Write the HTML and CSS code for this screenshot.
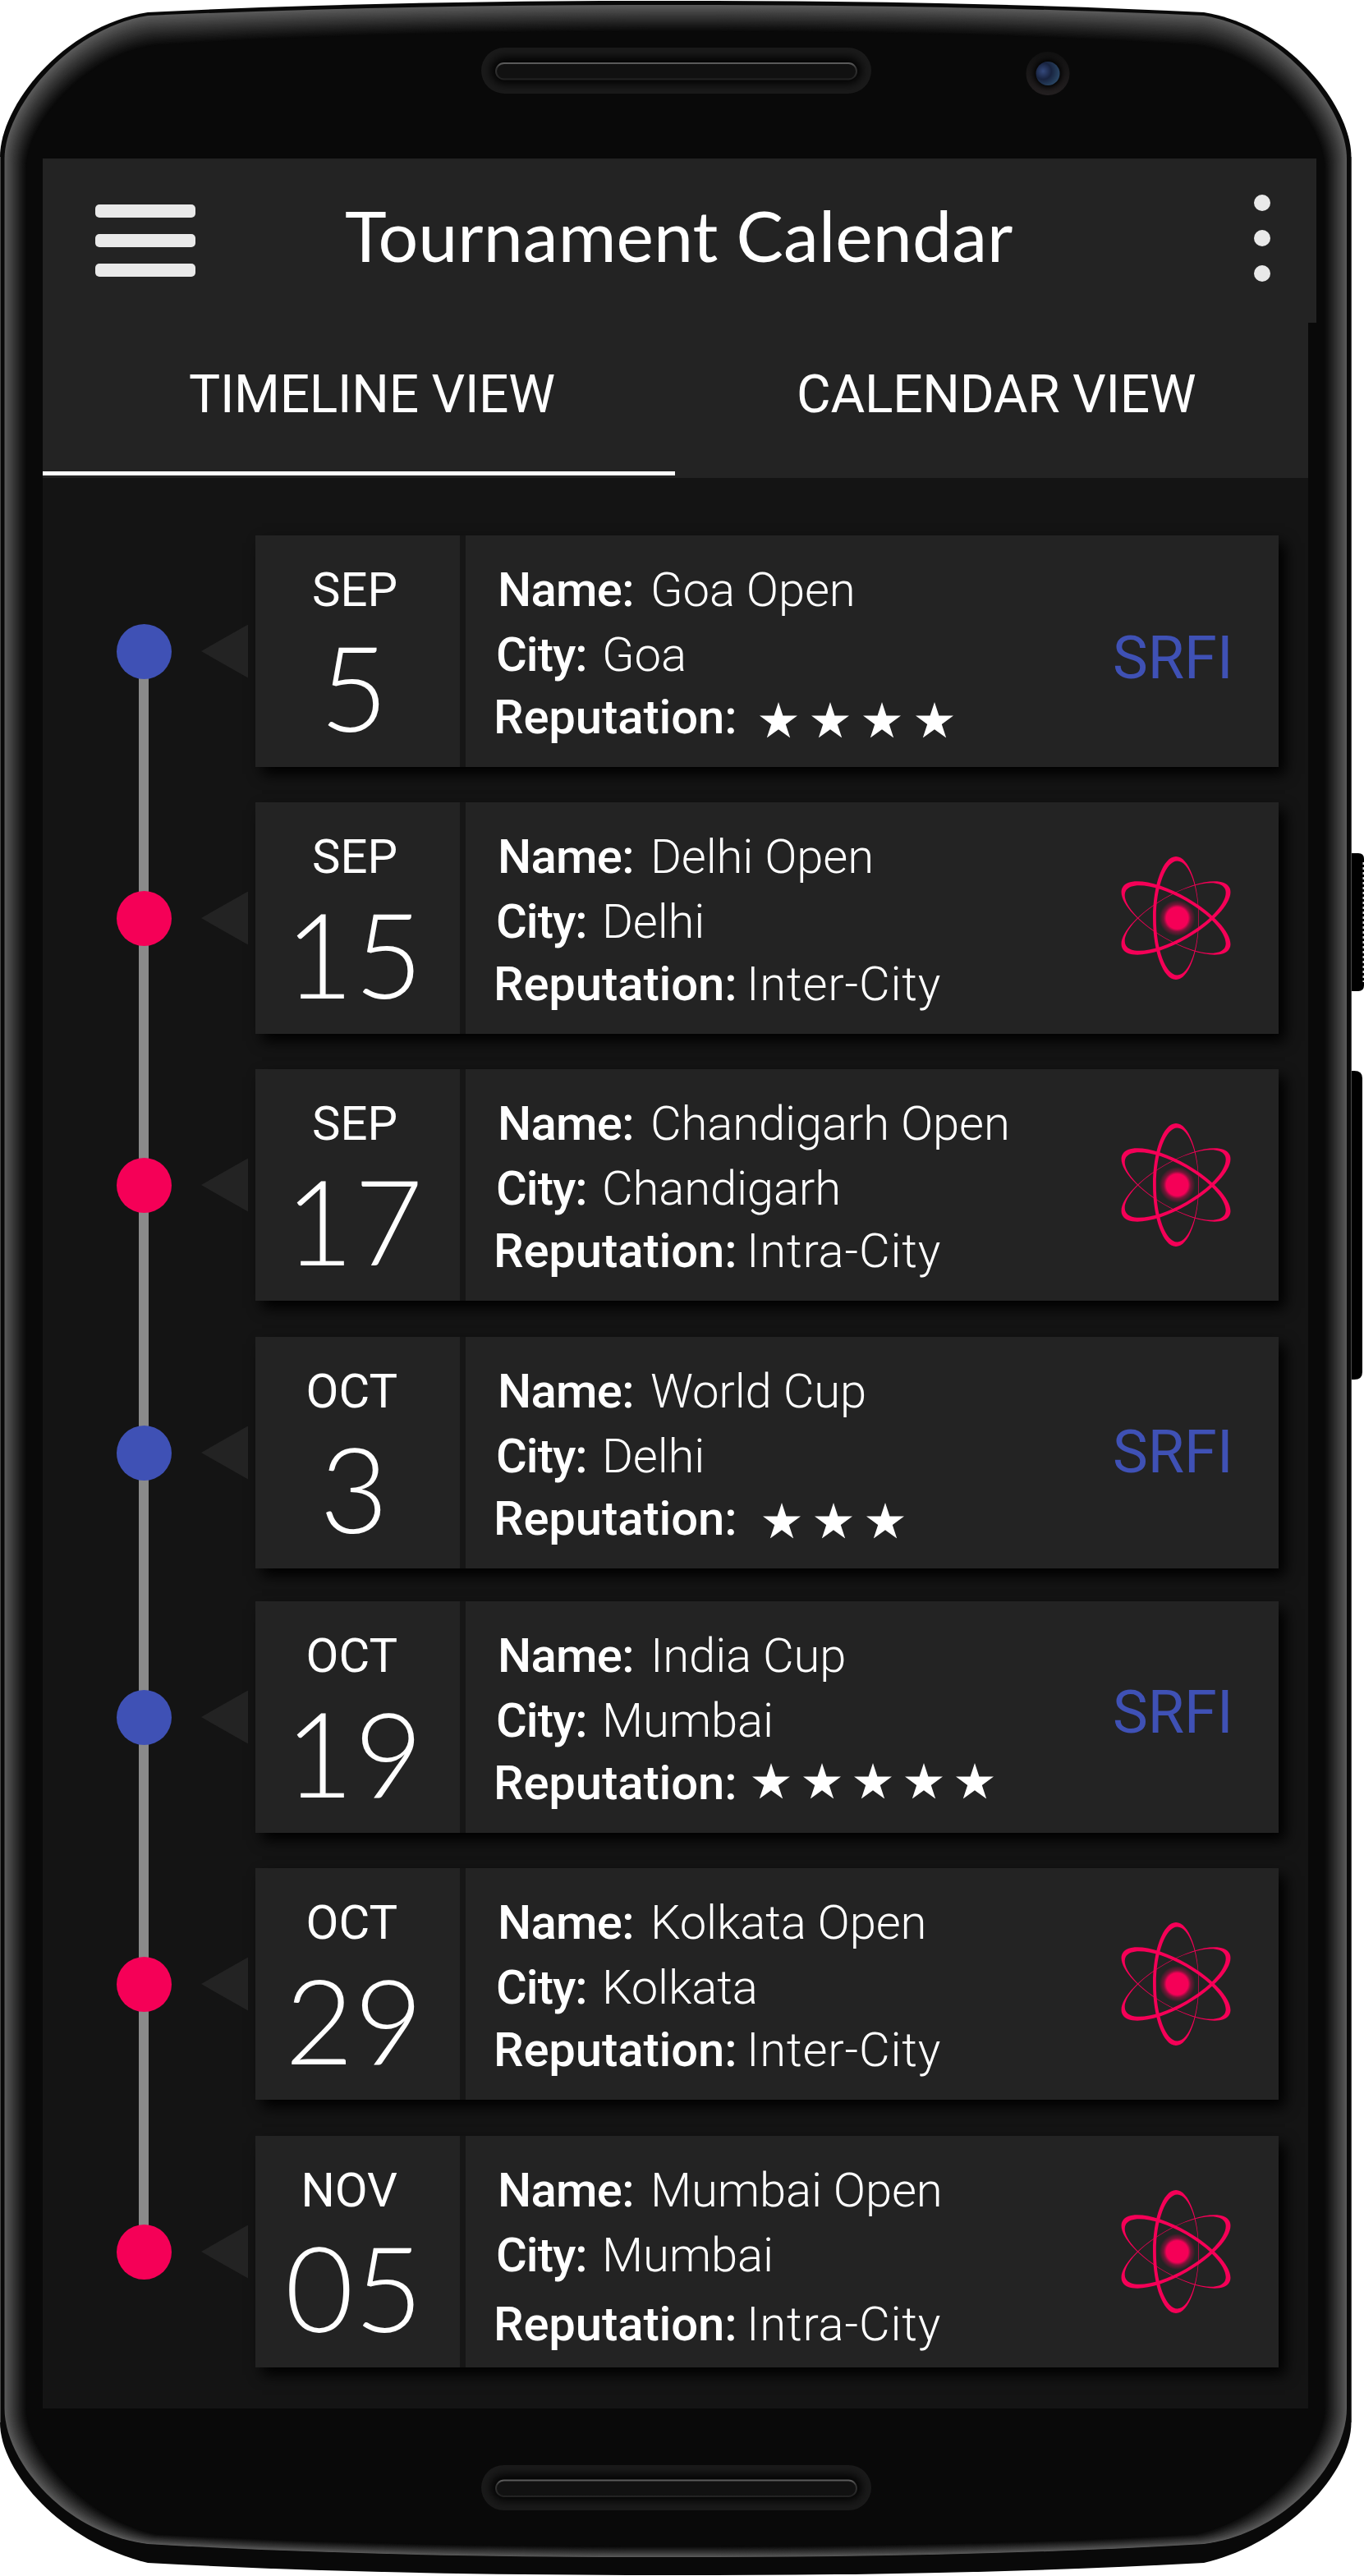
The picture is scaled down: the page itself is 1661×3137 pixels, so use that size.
FILE: index.html
```html
<!DOCTYPE html>
<html lang="en">
<head>
<meta charset="utf-8">
<title>Tournament Calendar</title>
<link rel="stylesheet" href="styles.css">
</head>
<body>
<svg class="sprite" aria-hidden="true">
  <defs>
    <symbol id="atom" viewBox="-70 -80 140 160">
      <g fill="#f50057">
        <path id="orbit" fill-rule="evenodd" d="M0-75C15.5-75 28-41.400 28 0S15.500 75 0 75-28 41.400-28 0-15.500-75 0-75ZM1.700-69.500C16.200-69 27.400-38 27.400 0S16.200 69 1.700 69.500C-12.500 69.500-24.200 38-24.200 0S-12.500-69.500 1.700-69.500Z"/>
        <use href="#orbit" transform="rotate(120)"/>
        <use href="#orbit" transform="rotate(240)"/>
      </g>
      <circle cx="1.500" r="22" fill="url(#glow)"/>
    </symbol>
    <radialGradient id="glow">
      <stop offset=".6" stop-color="#f50057"/>
      <stop offset=".75" stop-color="#f50057" stop-opacity=".4"/>
      <stop offset="1" stop-color="#f50057" stop-opacity="0"/>
    </radialGradient>
    <symbol id="star" viewBox="0 0 46 43.500">
      <path fill="#fff" d="M23 0 28.400 16.600H46L31.800 26.900 37.200 43.500 23 33.200 8.800 43.500 14.200 26.900 0 16.600H17.600Z"/>
    </symbol>
  </defs>
</svg>
<div class="phone">
  <svg class="frame" viewBox="0 0 1661 3137" aria-hidden="true">
    <defs>
      <linearGradient id="rim" x1="0" y1="0" x2="0" y2="1">
        <stop offset="0" stop-color="#5c5c5c"/><stop offset=".3" stop-color="#333"/><stop offset="1" stop-color="#222"/>
      </linearGradient>
      <radialGradient id="lens" cx=".3" cy=".4" r=".7">
        <stop offset="0" stop-color="#34497c"/><stop offset=".5" stop-color="#18233f"/><stop offset="1" stop-color="#2a4664"/>
      </radialGradient>
      <linearGradient id="bezel" x1="0" y1="0" x2="0" y2="1">
        <stop offset="0" stop-color="#101010"/><stop offset="1" stop-color="#231f20"/>
      </linearGradient>
      <filter id="soft" x="-10%" y="-80%" width="120%" height="260%"><feGaussianBlur stdDeviation="6"/></filter>
      <filter id="lensSoft" x="-50%" y="-50%" width="200%" height="200%"><feGaussianBlur stdDeviation="3"/></filter>
    </defs>
    <path d="M1640 1039H1654Q1661 1039 1661 1046V1200Q1661 1207 1654 1207H1640Z"/>
    <path d="M1660.500 1050V1196" stroke="#ddd" stroke-width="2" stroke-dasharray="3 3"/>
    <path d="M1640 1304H1649Q1659 1304 1659 1313V1671Q1659 1680 1649 1680H1640Z"/>
    <g id="shell"></g>
    <path d="M.5 191V2950M1645.500 191V2950" stroke="#4a4a4a"/>
    <rect x="586" y="58" width="475" height="56" rx="28" fill="#1a1a1a"/>
    <rect x="598" y="70" width="451" height="32" rx="16" filter="url(#soft)"/>
    <rect x="604" y="77" width="439" height="19.500" rx="9.700" fill="#111" stroke="url(#rim)" stroke-width="2"/>
    <rect x="586" y="3002" width="475" height="55" rx="27.500" fill="#1a1a1a"/>
    <rect x="598" y="3014" width="451" height="31" rx="15.500" filter="url(#soft)"/>
    <rect x="604" y="3020.500" width="439" height="19.500" rx="9.700" fill="#111" stroke="url(#rim)" stroke-width="2"/>
    <circle cx="1276" cy="89.500" r="26.500" fill="url(#bezel)"/>
    <circle cx="1276" cy="89.500" r="17" filter="url(#lensSoft)"/>
    <circle cx="1276" cy="89.500" r="14.500" fill="url(#lens)"/>
  </svg>

  <main class="screen">
    <header class="appbar">
      <div class="burger"><i></i><i></i><i></i></div>
      <h1 class="title">Tournament Calendar</h1>
      <div class="more"><i></i><i></i><i></i></div>
    </header>
    <nav class="tabs">
      <span class="tab tab-active">TIMELINE VIEW</span>
      <span class="tab">CALENDAR VIEW</span>
    </nav>
    <section class="timeline">
      <article class="entry">
        <span class="dot dot-srfi"></span><span class="pointer"></span>
        <div class="card">
          <div class="date"><span class="month">SEP</span><span class="day">5</span></div>
          <div class="info">
            <p class="name"><b>Name:</b><span>Goa Open</span></p>
            <p class="city"><b>City:</b><span>Goa</span></p>
            <p class="rep"><b>Reputation:</b><span class="stars stars-4"><svg><use href="#star"/></svg><svg><use href="#star"/></svg><svg><use href="#star"/></svg><svg><use href="#star"/></svg></span></p>
          </div>
          <div class="badge srfi srfi-low">SRFI</div>
        </div>
      </article>
      <article class="entry">
        <span class="dot"></span><span class="pointer"></span>
        <div class="card">
          <div class="date"><span class="month">SEP</span><span class="day">15</span></div>
          <div class="info">
            <p class="name"><b>Name:</b><span>Delhi Open</span></p>
            <p class="city"><b>City:</b><span>Delhi</span></p>
            <p class="rep"><b>Reputation:</b><span>Inter-City</span></p>
          </div>
          <div class="badge"><svg class="atom"><use href="#atom"/></svg></div>
        </div>
      </article>
      <article class="entry">
        <span class="dot"></span><span class="pointer"></span>
        <div class="card">
          <div class="date"><span class="month">SEP</span><span class="day">17</span></div>
          <div class="info">
            <p class="name"><b>Name:</b><span>Chandigarh Open</span></p>
            <p class="city"><b>City:</b><span>Chandigarh</span></p>
            <p class="rep"><b>Reputation:</b><span>Intra-City</span></p>
          </div>
          <div class="badge"><svg class="atom"><use href="#atom"/></svg></div>
        </div>
      </article>
      <article class="entry">
        <span class="dot dot-srfi"></span><span class="pointer"></span>
        <div class="card">
          <div class="date"><span class="month">OCT</span><span class="day">3</span></div>
          <div class="info">
            <p class="name"><b>Name:</b><span>World Cup</span></p>
            <p class="city"><b>City:</b><span>Delhi</span></p>
            <p class="rep"><b>Reputation:</b><span class="stars stars-3"><svg><use href="#star"/></svg><svg><use href="#star"/></svg><svg><use href="#star"/></svg></span></p>
          </div>
          <div class="badge srfi">SRFI</div>
        </div>
      </article>
      <article class="entry">
        <span class="dot dot-srfi"></span><span class="pointer"></span>
        <div class="card">
          <div class="date"><span class="month">OCT</span><span class="day">19</span></div>
          <div class="info">
            <p class="name"><b>Name:</b><span>India Cup</span></p>
            <p class="city"><b>City:</b><span>Mumbai</span></p>
            <p class="rep"><b>Reputation:</b><span class="stars stars-5"><svg><use href="#star"/></svg><svg><use href="#star"/></svg><svg><use href="#star"/></svg><svg><use href="#star"/></svg><svg><use href="#star"/></svg></span></p>
          </div>
          <div class="badge srfi srfi-high">SRFI</div>
        </div>
      </article>
      <article class="entry">
        <span class="dot"></span><span class="pointer"></span>
        <div class="card">
          <div class="date"><span class="month">OCT</span><span class="day">29</span></div>
          <div class="info">
            <p class="name"><b>Name:</b><span>Kolkata Open</span></p>
            <p class="city"><b>City:</b><span>Kolkata</span></p>
            <p class="rep"><b>Reputation:</b><span>Inter-City</span></p>
          </div>
          <div class="badge"><svg class="atom"><use href="#atom"/></svg></div>
        </div>
      </article>
      <article class="entry">
        <span class="dot"></span><span class="pointer"></span>
        <div class="card">
          <div class="date"><span class="month">NOV</span><span class="day">05</span></div>
          <div class="info">
            <p class="name"><b>Name:</b><span>Mumbai Open</span></p>
            <p class="city city-tall"><b>City:</b><span>Mumbai</span></p>
            <p class="rep"><b>Reputation:</b><span>Intra-City</span></p>
          </div>
          <div class="badge"><svg class="atom"><use href="#atom"/></svg></div>
        </div>
      </article>
    </section>
  </main>
</div>
<script src="frame.js"></script>
</body>
</html>
```
FILE: styles.css
```css
* { box-sizing: border-box; }
body { margin: 0; background: #fff; font-family: Roboto, "Liberation Sans", sans-serif; color: #fff; }
h1, p { margin: 0; font-weight: 400; }
.sprite { position: absolute; width: 0; height: 0; }

.phone { position: relative; width: 1661px; height: 3137px; padding: 193px 0 0 52px; overflow: hidden; }
.frame { position: absolute; top: 0; left: 0; width: 1661px; height: 3137px; }

.screen { position: relative; width: 1541px; height: 2740px; background: #141414; }

.appbar { display: flex; width: 1551px; height: 200px; padding: 0 56px 0 64px; background: #232323; }
.burger { display: flex; flex-direction: column; gap: 20.500px; width: 122px; padding-top: 56px; }
.burger i { height: 15.500px; border-radius: 5px; background: #e9e9e9; }
.title { flex: 1; padding-left: 182px; font: 400 86px/185px Lato, sans-serif; letter-spacing: .1px; white-space: nowrap; }
.more { display: flex; flex-direction: column; gap: 22.500px; padding-top: 43.500px; }
.more i { width: 20.500px; height: 20.500px; border-radius: 50%; background: #e9e9e9; }

.tabs { display: flex; height: 189px; background: #232323; }
.tab { width: 771px; padding-left: 148px; font-size: 64px; line-height: 176px; letter-spacing: -.25px; white-space: nowrap; }
.tab-active { width: 770px; height: 186px; padding-left: 178px; border-bottom: 5px solid #fff; }

.timeline { display: grid; grid-template-rows: 325px 325px 326px 322px 325px 326px 282px; padding: 70px 0 0 90px; }
.entry { position: relative; display: flex; align-items: center; height: 282px; }
.entry:not(:last-child)::before { content: ""; position: absolute; left: 27px; top: 141px; width: 12px; height: 326px; background: #8a8a8a; }
.dot { position: relative; z-index: 1; width: 67px; height: 67px; border-radius: 50%; background: #f50057; }
.dot-srfi { background: #3f51b5; }
.pointer { width: 57px; height: 65px; margin: 0 9px 0 36px; background: #232323; clip-path: polygon(0 50%, 100% 0, 100% 100%); }

.card { display: flex; width: 1246px; height: 282px; background: #232323; box-shadow: 8px 9px 16px #000; }
.date { display: flex; flex-direction: column; width: 256px; border-right: 7px solid #161616; }
.month { padding: 27px 76px 0 0; font-size: 58px; line-height: 78px; text-align: right; white-space: nowrap; }
.day { margin-top: -6px; padding-right: 8px; font: 300 144px/170px Lato, sans-serif; letter-spacing: 1px; text-align: center; }
.info { width: 784px; padding: 27px 0 0 34px; font-size: 58px; line-height: 78px; white-space: nowrap; }
.info p { display: flex; }
.info b { font-weight: 500; }
.info span { font-weight: 300; letter-spacing: -.15px; }
.name { height: 79px; padding-left: 5px; }
.name b { width: 186px; letter-spacing: -.7px; }
.city { height: 76px; padding-left: 3px; }
.city b { width: 129px; letter-spacing: -1px; }
.city-tall { height: 84px; }
.rep b { width: 308px; letter-spacing: -.1px; }
.info .rep span { letter-spacing: .8px; }
.stars { display: flex; gap: 17px; }
.stars svg { width: 46px; height: 43.500px; }
.stars-4 { padding: 21px 0 0 16px; gap: 17.200px; }
.stars-3 { padding: 20px 0 0 20px; }
.stars-5 { padding: 15px 0 0 7px; gap: 16px; }

.badge { display: flex; align-items: center; justify-content: flex-end; width: 206px; padding-right: 20px; }
.atom { width: 140px; height: 160px; margin-right: 35px; }
.srfi { align-items: flex-start; justify-content: flex-start; padding: 105px 0 0 4px; font-size: 72px; line-height: 72px; color: #3f51b5; }
.srfi-low { padding-top: 114px; }
.srfi-high { padding-top: 100px; }
```
FILE: frame.js
```js
// Draws the phone body: flat outer shell, then a bevel blended between two outlines.
const outer = { l: 0, r: 1645.5, ts: 191, tc1: 130, tc2: 32, ct: 15, top: 1, bs: 2950, bc1: 3010, bc2: 3096, cb: 3121, bot: 3136, ix: 0 };
const light = { l: 5.5, r: 1640, ts: 193, tc1: 135, tc2: 36, ct: 19, top: 6, bs: 2933, bc1: 2997, bc2: 3085, cb: 3098, bot: 3114, ix: 0 };
const dark = { l: 32, r: 1613, ts: 205, tc1: 150, tc2: 66, ct: 55, top: 38, bs: 2933, bc1: 2985, bc2: 3068, cb: 3086, bot: 3101, ix: 10 };
function outline(s) {
  const a = 180 + s.ix, b = 1466 - s.ix, c = 75 + s.l * 0.6 + s.ix, d = 1645 - c;
  return `M${s.l} ${s.ts}C${s.l} ${s.tc1} ${c} ${s.tc2} ${a} ${s.ct}C400 ${s.top + 3} 620 ${s.top} 823 ${s.top}` +
    `S1246 ${s.top + 3} ${b} ${s.ct}C${d} ${s.tc2} ${s.r} ${s.tc1} ${s.r} ${s.ts}V${s.bs}` +
    `C${s.r} ${s.bc1} ${d} ${s.bc2} ${b} ${s.cb}C1246 ${s.bot - 3} 1026 ${s.bot} 823 ${s.bot}` +
    `S400 ${s.bot - 3} ${a} ${s.cb}C${c} ${s.bc2} ${s.l} ${s.bc1} ${s.l} ${s.bs}Z`;
}
const mix = (t) => Object.fromEntries(Object.keys(light).map((k) => [k, light[k] + (dark[k] - light[k]) * t]));
let paths = `<path fill="#090909" d="${outline(outer)}"/>`;
const steps = 26;
for (let i = 0; i <= steps; i++) {
  const t = i / steps;
  const v = Math.round(9 + 81 * Math.pow(1 - t, 1.1));
  paths += `<path fill="rgb(${v},${v},${v})" d="${outline(mix(t))}"/>`;
}
document.getElementById("shell").innerHTML = paths;
```
